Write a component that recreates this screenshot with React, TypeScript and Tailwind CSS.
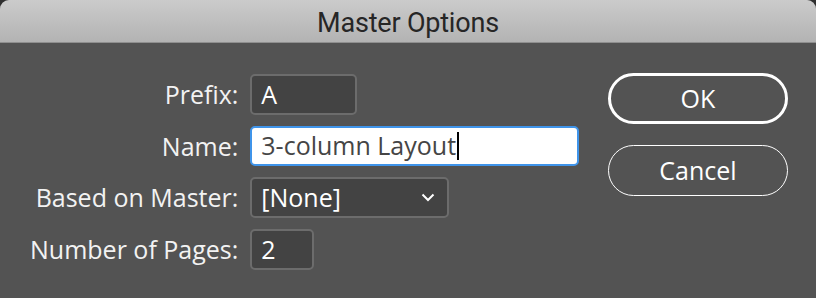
import React from "react";

export default function App() {
  const label = "text-right text-[25px] text-[#f2f2f2] leading-none";
  return (
    <div className="w-[816px] h-[298px] bg-[#2f2f2f]" style={{ fontFamily: '"Open Sans", "Noto Sans", sans-serif' }}>
      <div className="w-full h-full rounded-t-[9px] overflow-hidden bg-[#535353] flex flex-col">
        <div className="h-[43px] shrink-0 bg-gradient-to-b from-[#cbcbcb] to-[#b3b3b3] border-b border-[#8f8f8f] flex items-center justify-center pt-[4px]">
          <span className="text-[27px] leading-none text-[#262626] tracking-[-0.2px]" style={{ fontFamily: 'Roboto, "Liberation Sans", sans-serif' }}>Master Options</span>
        </div>
        <div className="flex flex-1 pt-[31px]">
          <div className="grid grid-cols-[auto_auto] justify-start gap-x-[12px] gap-y-[11px] items-center content-start pl-[30px] w-[590px]">
            <div className={label}>Prefix:</div>
            <div className="w-[107px] h-[41px] rounded-[5px] border-2 border-[#6c6c6c] bg-[#434343] flex items-center pl-[9px] text-[25px] text-white">A</div>
            <div className={label}>Name:</div>
            <div className="w-[329px] h-[40px] rounded-[5px] border-2 border-[#3f94ea] bg-white flex items-center pl-[9px] text-[25px] text-[#454545]">
              3-column Layout<span className="inline-block w-[2px] h-[28px] bg-black ml-[1px]" />
            </div>
            <div className={label}>Based on Master:</div>
            <div className="w-[199px] h-[41px] rounded-[5px] border-2 border-[#6c6c6c] bg-[#434343] flex items-center justify-between pl-[9px] pr-[12px] text-[25px] text-white">
              <span>[None]</span>
              <svg width="14" height="9" viewBox="0 0 14 9"><path d="M1.5 1.5 L7 7 L12.5 1.5" fill="none" stroke="white" strokeWidth="2" /></svg>
            </div>
            <div className={label}>Number of Pages:</div>
            <div className="w-[64px] h-[41px] rounded-[5px] border-2 border-[#6c6c6c] bg-[#434343] flex items-center pl-[9px] text-[25px] text-white">2</div>
          </div>
          <div className="flex flex-col gap-[21px] pl-[18px] -mt-[1px]">
            <div className="w-[180px] h-[51px] rounded-full border-[3px] border-white flex items-center justify-center text-[25px] text-white">OK</div>
            <div className="w-[180px] h-[51px] rounded-full border-[1.5px] border-white flex items-center justify-center text-[25px] text-white">Cancel</div>
          </div>
        </div>
      </div>
    </div>
  );
}
